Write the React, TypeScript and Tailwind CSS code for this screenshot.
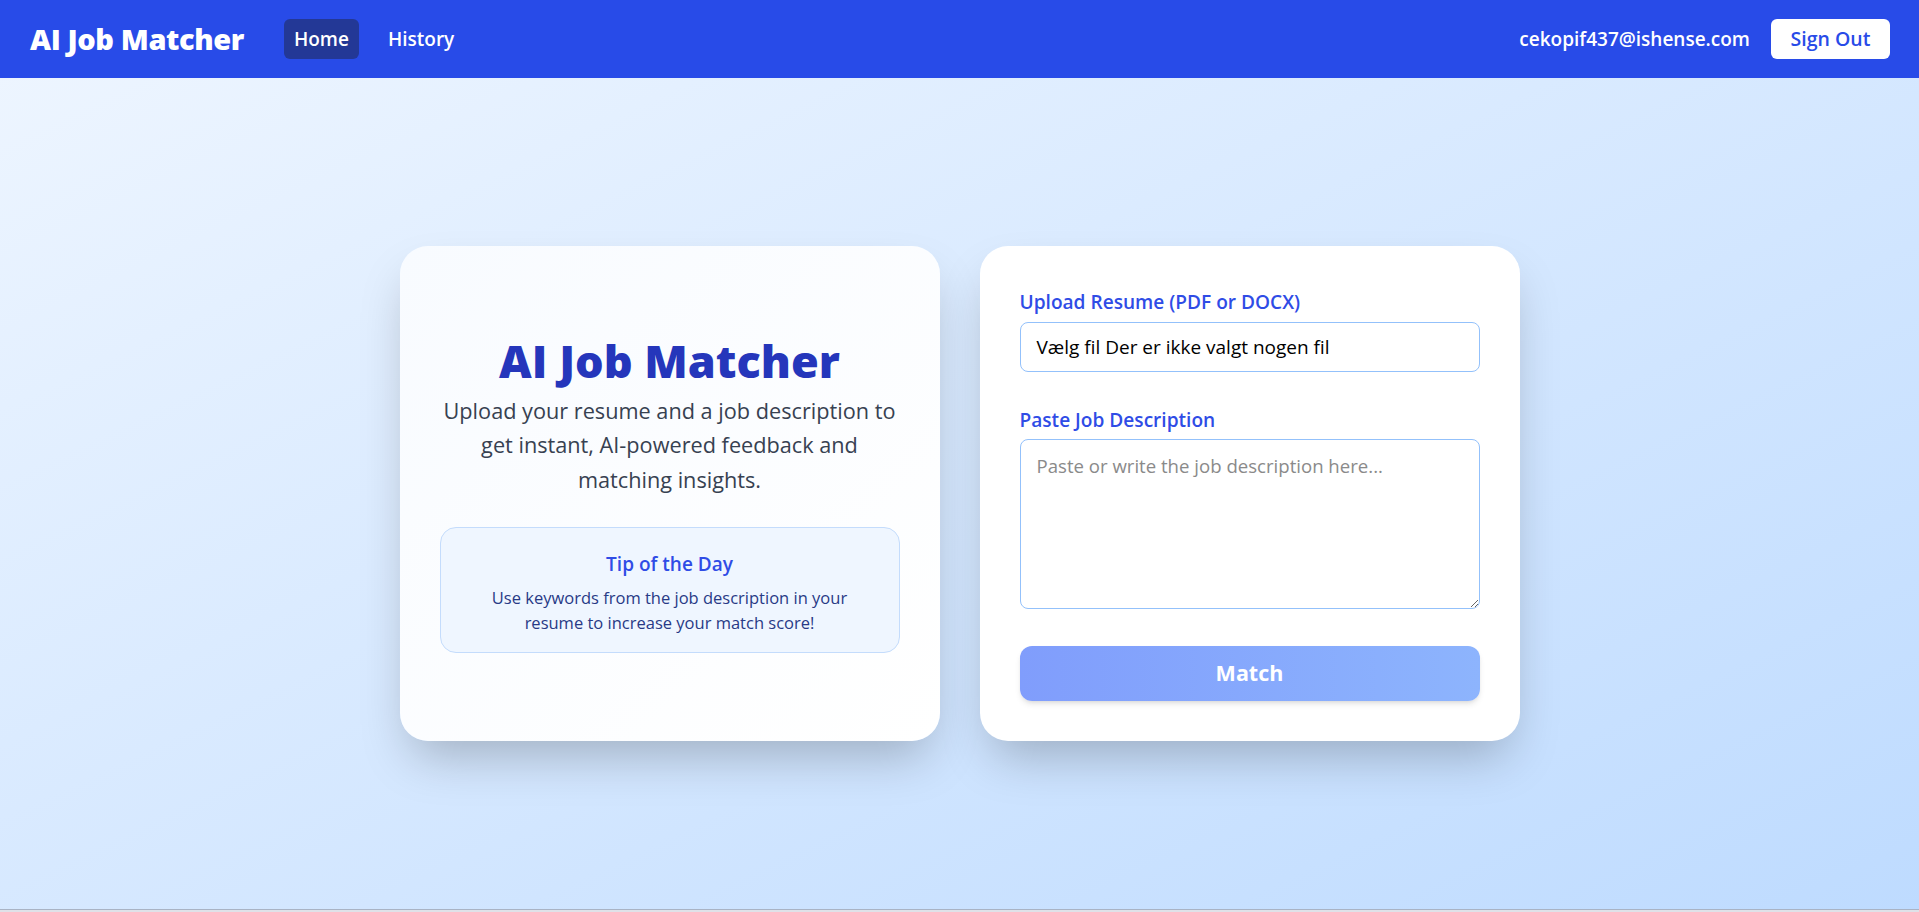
import React from "react";

export default function App() {
  return (
    <div className="min-h-screen w-full font-['Open_Sans',sans-serif] bg-gradient-to-br from-[#eff6ff] to-[#bedbff]">
      <nav className="h-[78px] bg-[#284be8] flex items-center justify-between pl-[30px] pr-[29px]">
        <div className="flex items-center">
          <span className="text-[29px] font-extrabold text-white tracking-[-0.4px]">AI Job Matcher</span>
          <div className="flex items-center ml-[40px] gap-[19px]">
            <a className="h-10 px-2.5 flex items-center rounded-md bg-[#233896] text-white text-[19px] font-semibold">Home</a>
            <a className="h-10 px-2.5 flex items-center rounded-md text-white text-[19px] font-semibold">History</a>
          </div>
        </div>
        <div className="flex items-center gap-[21px]">
          <span className="text-white text-[19px] font-semibold">cekopif437@ishense.com</span>
          <button className="h-10 w-[119px] rounded-md bg-white text-[#284be8] text-[19.5px] font-semibold">Sign Out</button>
        </div>
      </nav>
      <main className="h-[831px] flex items-center justify-center">
        <div className="grid grid-cols-2 gap-10 w-[1120px]">
          <section className="rounded-[28px] p-10 shadow-2xl bg-gradient-to-br from-[#f8fbff] to-white flex flex-col justify-center text-center">
            <h1 className="text-[45px] leading-[54px] font-extrabold text-[#2536bb]">AI Job Matcher</h1>
            <p className="mt-[6px] text-[21.7px] leading-[34.5px] text-[#374151]">
              Upload your resume and a job description to get instant, AI-powered feedback and matching insights.
            </p>
            <div className="mt-[30px] h-[126px] rounded-2xl border border-[#c4dcfc] bg-[#eff6ff] pt-[22px] px-6">
              <div className="text-[19px] leading-[28px] font-semibold text-[#2f4ce6]">Tip of the Day</div>
              <div className="mt-[7px] text-[16.5px] leading-[25px] text-[#283a86] px-3">
                Use keywords from the job description in your resume to increase your match score!
              </div>
            </div>
          </section>
          <section className="rounded-[28px] p-10 shadow-2xl bg-white flex flex-col">
            <label className="mt-[2px] block text-[19.1px] leading-[28px] font-semibold text-[#2f4ce6]">Upload Resume (PDF or DOCX)</label>
            <div className="mt-[6px] h-[50px] rounded-lg border border-[#93c1fb] flex items-center px-4 text-[19px] text-black">
              Vælg fil Der er ikke valgt nogen fil
            </div>
            <label className="mt-[34px] block text-[19.1px] leading-[28px] font-semibold text-[#2f4ce6]">Paste Job Description</label>
            <textarea
              className="mt-[5px] h-[170px] rounded-lg border border-[#93c1fb] px-4 py-3 text-[18.6px] leading-[28px] placeholder:text-[#8a8a8a] outline-none"
              placeholder="Paste or write the job description here..."
            />
            <button className="mt-[37px] h-[55px] rounded-xl bg-gradient-to-r from-[#809dfc] to-[#8db4fd] text-white text-[21.5px] font-bold shadow-md">
              Match
            </button>
          </section>
        </div>
      </main>
      <div className="h-[3px] border-t border-[#a9b3c4] bg-[#dfe1e8]" />
    </div>
  );
}
